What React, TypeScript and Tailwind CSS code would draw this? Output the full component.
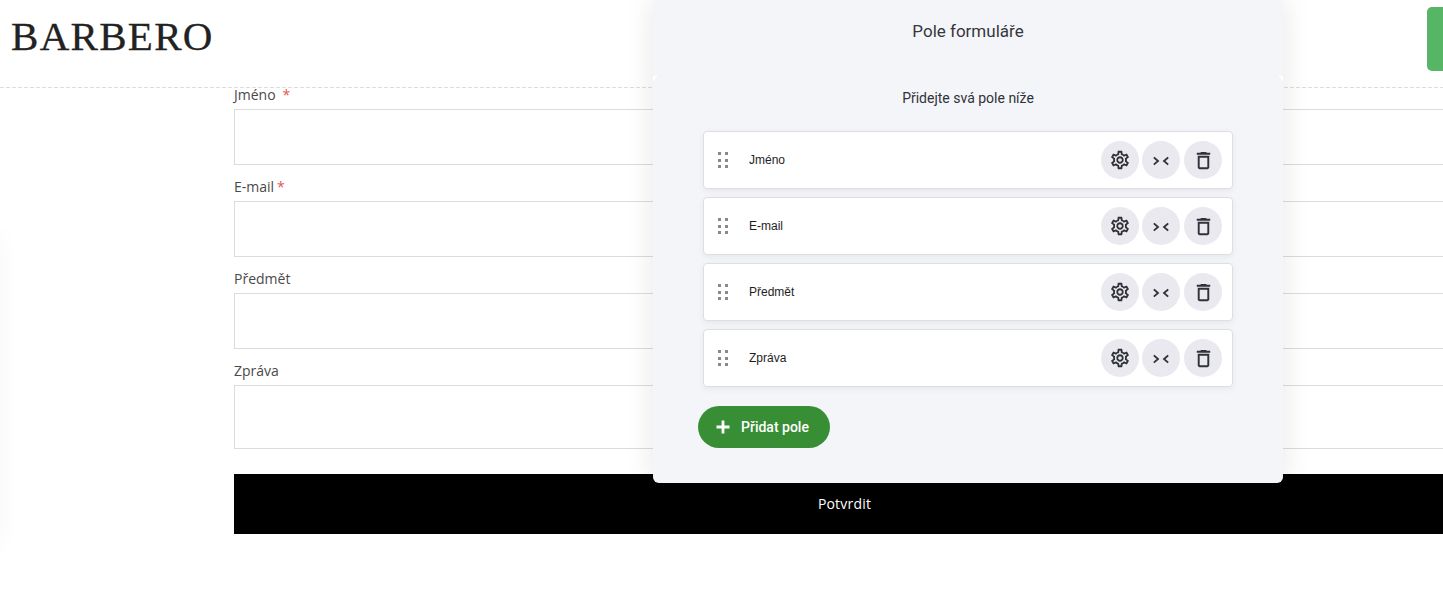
import React from "react";
import { MdOutlineSettings, MdOutlineDelete } from "react-icons/md";

const Collapse = () => (
  <svg className="mt-[1px]" width="16" height="10" viewBox="0 0 16 10" fill="none" stroke="#2f3237" strokeWidth="1.8" strokeLinecap="square">
    <path d="M1.5 2 L5 5 L1.5 8" />
    <path d="M14.5 2 L11 5 L14.5 8" />
  </svg>
);

const Grip = () => (
  <div className="grid grid-cols-2 gap-x-[4px] gap-y-[3.5px] w-[10px]">
    {[0, 1, 2, 3, 4, 5].map((i) => (
      <span key={i} className="w-[3px] h-[3px] bg-[#88898c]" />
    ))}
  </div>
);

const IconBtn = ({ children, className = "" }: { children: React.ReactNode; className?: string }) => (
  <div className={`w-[38px] h-[38px] rounded-full bg-[#e9e9ef] flex items-center justify-center text-[#2f3237] ${className}`}>{children}</div>
);

const Row = ({ label }: { label: string }) => (
  <div className="h-[58px] bg-white rounded-[4px] border border-[#dfdfe3] shadow-[0_2px_6px_rgba(0,0,0,0.06)] flex items-center pl-[14px] pr-[10px]">
    <Grip />
    <span className="ml-[21px] text-[12px] text-[#1e1e22] font-['Liberation_Sans',sans-serif]">{label}</span>
    <div className="ml-auto flex">
      <IconBtn><MdOutlineSettings size={22} /></IconBtn>
      <IconBtn className="ml-[3px]"><Collapse /></IconBtn>
      <IconBtn className="ml-[4px]"><MdOutlineDelete size={23} /></IconBtn>
    </div>
  </div>
);

const Field = ({ label, req, h = "h-[56px]", mt = "mt-[14px]" }: { label: string; req?: React.ReactNode; h?: string; mt?: string }) => (
  <div className={mt}>
    <div className="h-[22px] text-[14px] leading-[16px] text-[#4a4a4a]">
      {label}
      {req}
    </div>
    <div className={`${h} border border-[#dcdcdc] border-r-0 bg-white`} />
  </div>
);

export default function App() {
  return (
    <div className="relative w-[1443px] h-[614px] overflow-hidden bg-white font-['Open_Sans',sans-serif]">
      <header className="h-[88px] flex flex-col">
        <div className="flex-1 flex justify-between items-start">
          <div className="ml-[11px] mt-[12px] text-[41px] leading-[48px] tracking-[1.3px] text-[#222222] font-['Liberation_Serif',serif] [-webkit-text-stroke:0.3px_#222222]">BARBERO</div>
          <div className="mt-[7px] w-[16px] h-[64px] bg-[#57b566] rounded-l-[5px]" />
        </div>
        <div className="h-px bg-[repeating-linear-gradient(90deg,#dedede_0_4px,transparent_4px_6px)]" />
      </header>

      <main className="ml-[234px]">
        <Field label="Jméno" mt="mt-[-1px]" req={<span className="text-[#e2574c] ml-[7px]">*</span>} />
        <Field label="E-mail" req={<span className="text-[#e2574c] ml-[3px]">*</span>} />
        <Field label="Předmět" />
        <Field label="Zpráva" h="h-[64px]" />
        <div className="mt-[25px] h-[60px] bg-black text-white text-[14px] tracking-[0.2px] flex items-center justify-center pl-[12px] pb-[2px] w-[1209px]">
          Potvrdit
        </div>
      </main>

      <div className="absolute left-[-10px] top-[235px] w-[10px] h-[310px] shadow-[0_0_20px_rgba(0,0,0,0.05)]" />

      <section className="absolute left-[653px] top-0 w-[630px] h-[483px] bg-[#f4f5f9] rounded-b-[6px] shadow-[0_0_30px_rgba(0,0,0,0.1)] font-['Roboto',sans-serif]">
        <h2 className="pt-[20px] text-center text-[17px] leading-[22px] text-[#35373c]">Pole formuláře</h2>
        <p className="mt-[46px] text-center text-[14px] leading-[20px] text-[#2f3237]">Přidejte svá pole níže</p>
        <div className="mt-[23px] mx-[50px] flex flex-col gap-[8px]">
          <Row label="Jméno" />
          <Row label="E-mail" />
          <Row label="Předmět" />
          <Row label="Zpráva" />
        </div>
        <button className="ml-[45px] mt-[19px] w-[132px] h-[42px] rounded-full bg-[#378e35] text-white text-[14px] font-medium flex items-center pl-[18px]">
          <svg width="14" height="14" viewBox="0 0 14 14" stroke="#fff" strokeWidth="2.8"><path d="M7 0.5v13M0.5 7h13" /></svg>
          <span className="ml-[11px]">Přidat pole</span>
        </button>
        <span className="absolute left-0 top-[76px] w-0 h-0 border-t-[5px] border-t-white border-r-[5px] border-r-transparent" />
        <span className="absolute right-0 top-[76px] w-0 h-0 border-t-[5px] border-t-white border-l-[5px] border-l-transparent" />
      </section>
    </div>
  );
}
